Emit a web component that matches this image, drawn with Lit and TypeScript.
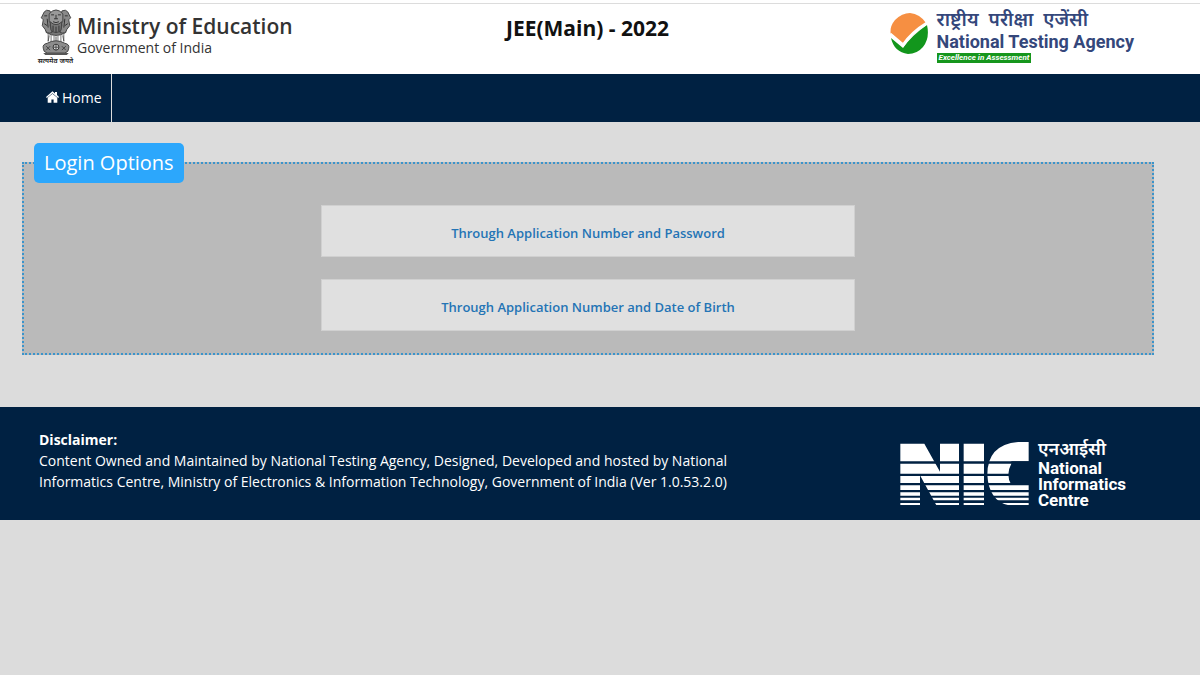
import { LitElement, html, svg, css } from "lit";
import { customElement } from "lit/decorators.js";

const emblem = svg`
  <g fill="#555" stroke="#444" stroke-width="1">
    <path d="M11 6 Q18 0 25 6 L29 9 L28 25 Q18 31 8 25 L7 9Z" fill="#777"/>
    <path d="M6 4 Q8 1 12 3 L13 10 L12 18 L14 25 Q8 27 7 22 L4 18 L5 12 L3 10Z" fill="#8a8a8a"/>
    <path d="M30 4 Q28 1 24 3 L23 10 L24 18 L22 25 Q28 27 29 22 L32 18 L31 12 L33 10Z" fill="#8a8a8a"/>
    <path d="M11 6 Q18 -2 25 6 L25 14 Q18 21 11 14Z" fill="#999"/>
    <path d="M12 14 L13 23 Q18 27 23 23 L24 14 Q18 20 12 14Z" fill="#777"/>
  </g>
  <g fill="none" stroke="#333" stroke-width="1">
    <path d="M13 7h3M20 7h3M16 11h4M18 7v4M15 14q3 2 6 0M6 8h3M27 8h3M9 11l1 9M27 11l-1 9M15 18v6M18 19v6M21 18v6M6 16l3 2M30 16l-3 2"/>
    <path d="M10 26v8M13 27v8M16 27v7M20 27v7M23 27v8M26 26v8" stroke="#777"/>
    <path d="M11 28l-1 6M25 28l1 6M18 29v5" stroke="#555"/>
  </g>
  <path d="M9 36 Q18 31 27 36 Q32 37 31 41 Q31 45 27 46 L9 46 Q5 45 5 41 Q4 37 9 36Z" fill="#8c8c8c" stroke="#444"/>
  <circle cx="18" cy="40" r="3" fill="#ddd" stroke="#333"/>
  <path d="M18 37v6M15 40h6M8 39l4 4M12 39l-4 4M24 39l4 4M28 39l-4 4" stroke="#444" stroke-width="1"/>
  <path d="M5 46h26l-2 2H7z" fill="#555"/>`;

const stripes = [
  [50, 60], [117, 30], [154, 21], [182, 14], [203, 10], [219, 8], [235, 7],
];

@customElement("app-root")
export class AppRoot extends LitElement {
  static styles = css`
    :host {
      display: block;
      min-height: 100vh;
      background: #dcdcdc;
      color: #fff;
      font-family: "Open Sans", "Noto Sans", sans-serif;
      font-size: 14px;
    }
    * { box-sizing: border-box; }
    a { text-decoration: none; }
    h1, h2, p { margin: 0; }
    .header {
      display: grid;
      grid-template-columns: 1fr auto 1fr;
      margin-top: 3px;
      padding: 4px 62px 8px 37px;
      border-top: 1px solid #dcdcdc;
      background: #fff;
    }
    .frame { display: flow-root; background: #fff; }
    .ministry { display: flex; gap: 3px; color: #333; }
    .state { width: 37px; display: flex; flex-direction: column; align-items: center; }
    .emblem { width: 36px; height: 48px; }
    .motto { font-size: 7px; line-height: 10px; white-space: nowrap; color: #222; font-weight: 600; }
    .names { padding-top: 6px; }
    .ministry-name { font-size: 21px; line-height: 24px; font-weight: 600; }
    .government { font-size: 14px; line-height: 20px; }
    .exam { color: #111; font-size: 21px; line-height: 30px; font-weight: 700; padding-top: 5px; }
    .agency { display: flex; gap: 9px; justify-content: flex-end; padding: 1px 4px 0 0; color: #34477b; }
    .tick { width: 38px; height: 42px; margin-top: 4px; }
    .agency-text { display: flex; flex-direction: column; align-items: flex-start; font-family: Roboto, "Noto Sans Devanagari", sans-serif; }
    .agency-hindi { display: flex; gap: 10px; font-size: 19px; line-height: 22px; font-weight: 600; }
    .agency-name { font-size: 18px; line-height: 22px; font-weight: 700; white-space: nowrap; }
    .agency-motto { background: #16961c; color: #fff; font-size: 8px; line-height: 10px; font-weight: 700; font-style: italic; padding: 0 2px; }
    .nav { background: #002142; padding-left: 37px; display: flex; }
    .home {
      display: flex; align-items: center; gap: 3px; height: 48px; padding: 0 9px 2px;
      color: #fff; border-right: 1px solid #dcdcdc; font-size: 14px;
    }
    .house { width: 13px; height: 12px; }
    .main { padding: 21px 46px 52px 22px; }
    .options {
      margin: 0; min-width: 0; padding: 22px 0; border: 2px dotted #3a94cc; background: #bababa;
      display: flex; flex-direction: column; align-items: center; gap: 22px;
    }
    .legend {
      margin-left: 10px; padding: 0 10px; border-radius: 5px; background: #2ca7fc;
      font-size: 20px; line-height: 40px;
    }
    .option {
      width: 47.4%; padding: 18px 16px 14px; text-align: center; background: #e0e0e0; border: 1px solid #d0d0d0;
      color: #2474b5; font-size: 13px; line-height: 18px; font-weight: 600;
    }
    .footer {
      background: #002142; display: flex; justify-content: space-between; gap: 32px;
      padding: 22px 74px 12px 39px; line-height: 21px;
    }
    .disclaimer { flex: 0 1 704px; }
    .nic { display: flex; gap: 8px; color: #fff; padding-top: 8px; }
    .nic-mark { width: 130px; height: 64px; margin-top: 5px; }
    .nic-text { font-family: Roboto, "Noto Sans Devanagari", sans-serif; font-size: 17px; line-height: 16px; font-weight: 700; }
    .nic-hindi { font-size: 18px; line-height: 23px; font-weight: 600; }
  `;

  render() {
    return html`
      <div class="frame">
        <header class="header">
          <div class="ministry">
            <div class="state">
              <svg class="emblem" viewBox="0 0 36 49" aria-hidden="true">${emblem}</svg>
              <span class="motto" lang="hi">सत्यमेव जयते</span>
            </div>
            <div class="names">
              <div class="ministry-name">Ministry of Education</div>
              <div class="government">Government of India</div>
            </div>
          </div>
          <h1 class="exam">JEE(Main) - 2022</h1>
          <div class="agency">
            <svg class="tick" viewBox="0 0 38 42" aria-hidden="true">
              <path d="M1 23 Q-1 14 5 7 Q12 0 20 0 Q30 1 36 10 L14 31Z" fill="#f68f42"/>
              <path d="M1 25 L13 35 Q22 22 37 12 Q40 25 33 34 Q27 41 18 41 Q4 39 1 25Z" fill="#12961c"/>
              <path d="M0 21 L13 32 Q22 19 37 10" fill="none" stroke="#fff" stroke-width="3"/>
            </svg>
            <div class="agency-text">
              <span class="agency-hindi" lang="hi"><span>राष्ट्रीय</span> <span>परीक्षा</span> <span>एजेंसी</span></span>
              <span class="agency-name">National Testing Agency</span>
              <span class="agency-motto">Excellence in Assessment</span>
            </div>
          </div>
        </header>
      </div>
      <nav class="nav">
        <a class="home" href="#">
          <svg class="house" viewBox="0 0 13 12" fill="#fff" aria-hidden="true">
            <path d="M6.5 0.3 L9 2.4 V1 H11 V4.1 L13 5.9 L12.2 7 L6.5 2.2 L0.8 7 L0 5.9Z"/>
            <path d="M6.5 2.8 L11.3 6.8 V11.7 H7.6 V8.4 H5.4 V11.7 H1.7 V6.8Z"/>
          </svg>
          Home
        </a>
      </nav>
      <main class="main">
        <fieldset class="options">
          <legend class="legend">Login Options</legend>
          <a class="option" href="#">Through Application Number and Password</a>
          <a class="option" href="#">Through Application Number and Date of Birth</a>
        </fieldset>
      </main>
      <footer class="footer">
        <div class="disclaimer">
          <strong>Disclaimer:</strong>
          <p>Content Owned and Maintained by National Testing Agency, Designed, Developed and hosted by National Informatics Centre, Ministry of Electronics &amp; Information Technology, Government of India (Ver 1.0.53.2.0)</p>
        </div>
        <div class="nic">
          <svg class="nic-mark" viewBox="30 52 390 192" aria-hidden="true">
            <clipPath id="bars">
              ${stripes.map(([y, h]) => svg`<rect x="30" y=${y} width="390" height=${h}></rect>`)}
            </clipPath>
            <g clip-path="url(#bars)" fill="#fff">
              <path d="M31 57H103L150 141V57H207V242H139L90 152V242H31Z"/>
              <path d="M221 57H282V242H221Z"/>
              <path d="M416 52H385Q292 60 292 150Q296 228 356 242H416V181H364Q346 150 364 117V110H416Z"/>
            </g>
          </svg>
          <div class="nic-text">
            <div class="nic-hindi" lang="hi">एनआईसी</div>
            <div>National</div>
            <div>Informatics</div>
            <div>Centre</div>
          </div>
        </div>
      </footer>
    `;
  }
}
